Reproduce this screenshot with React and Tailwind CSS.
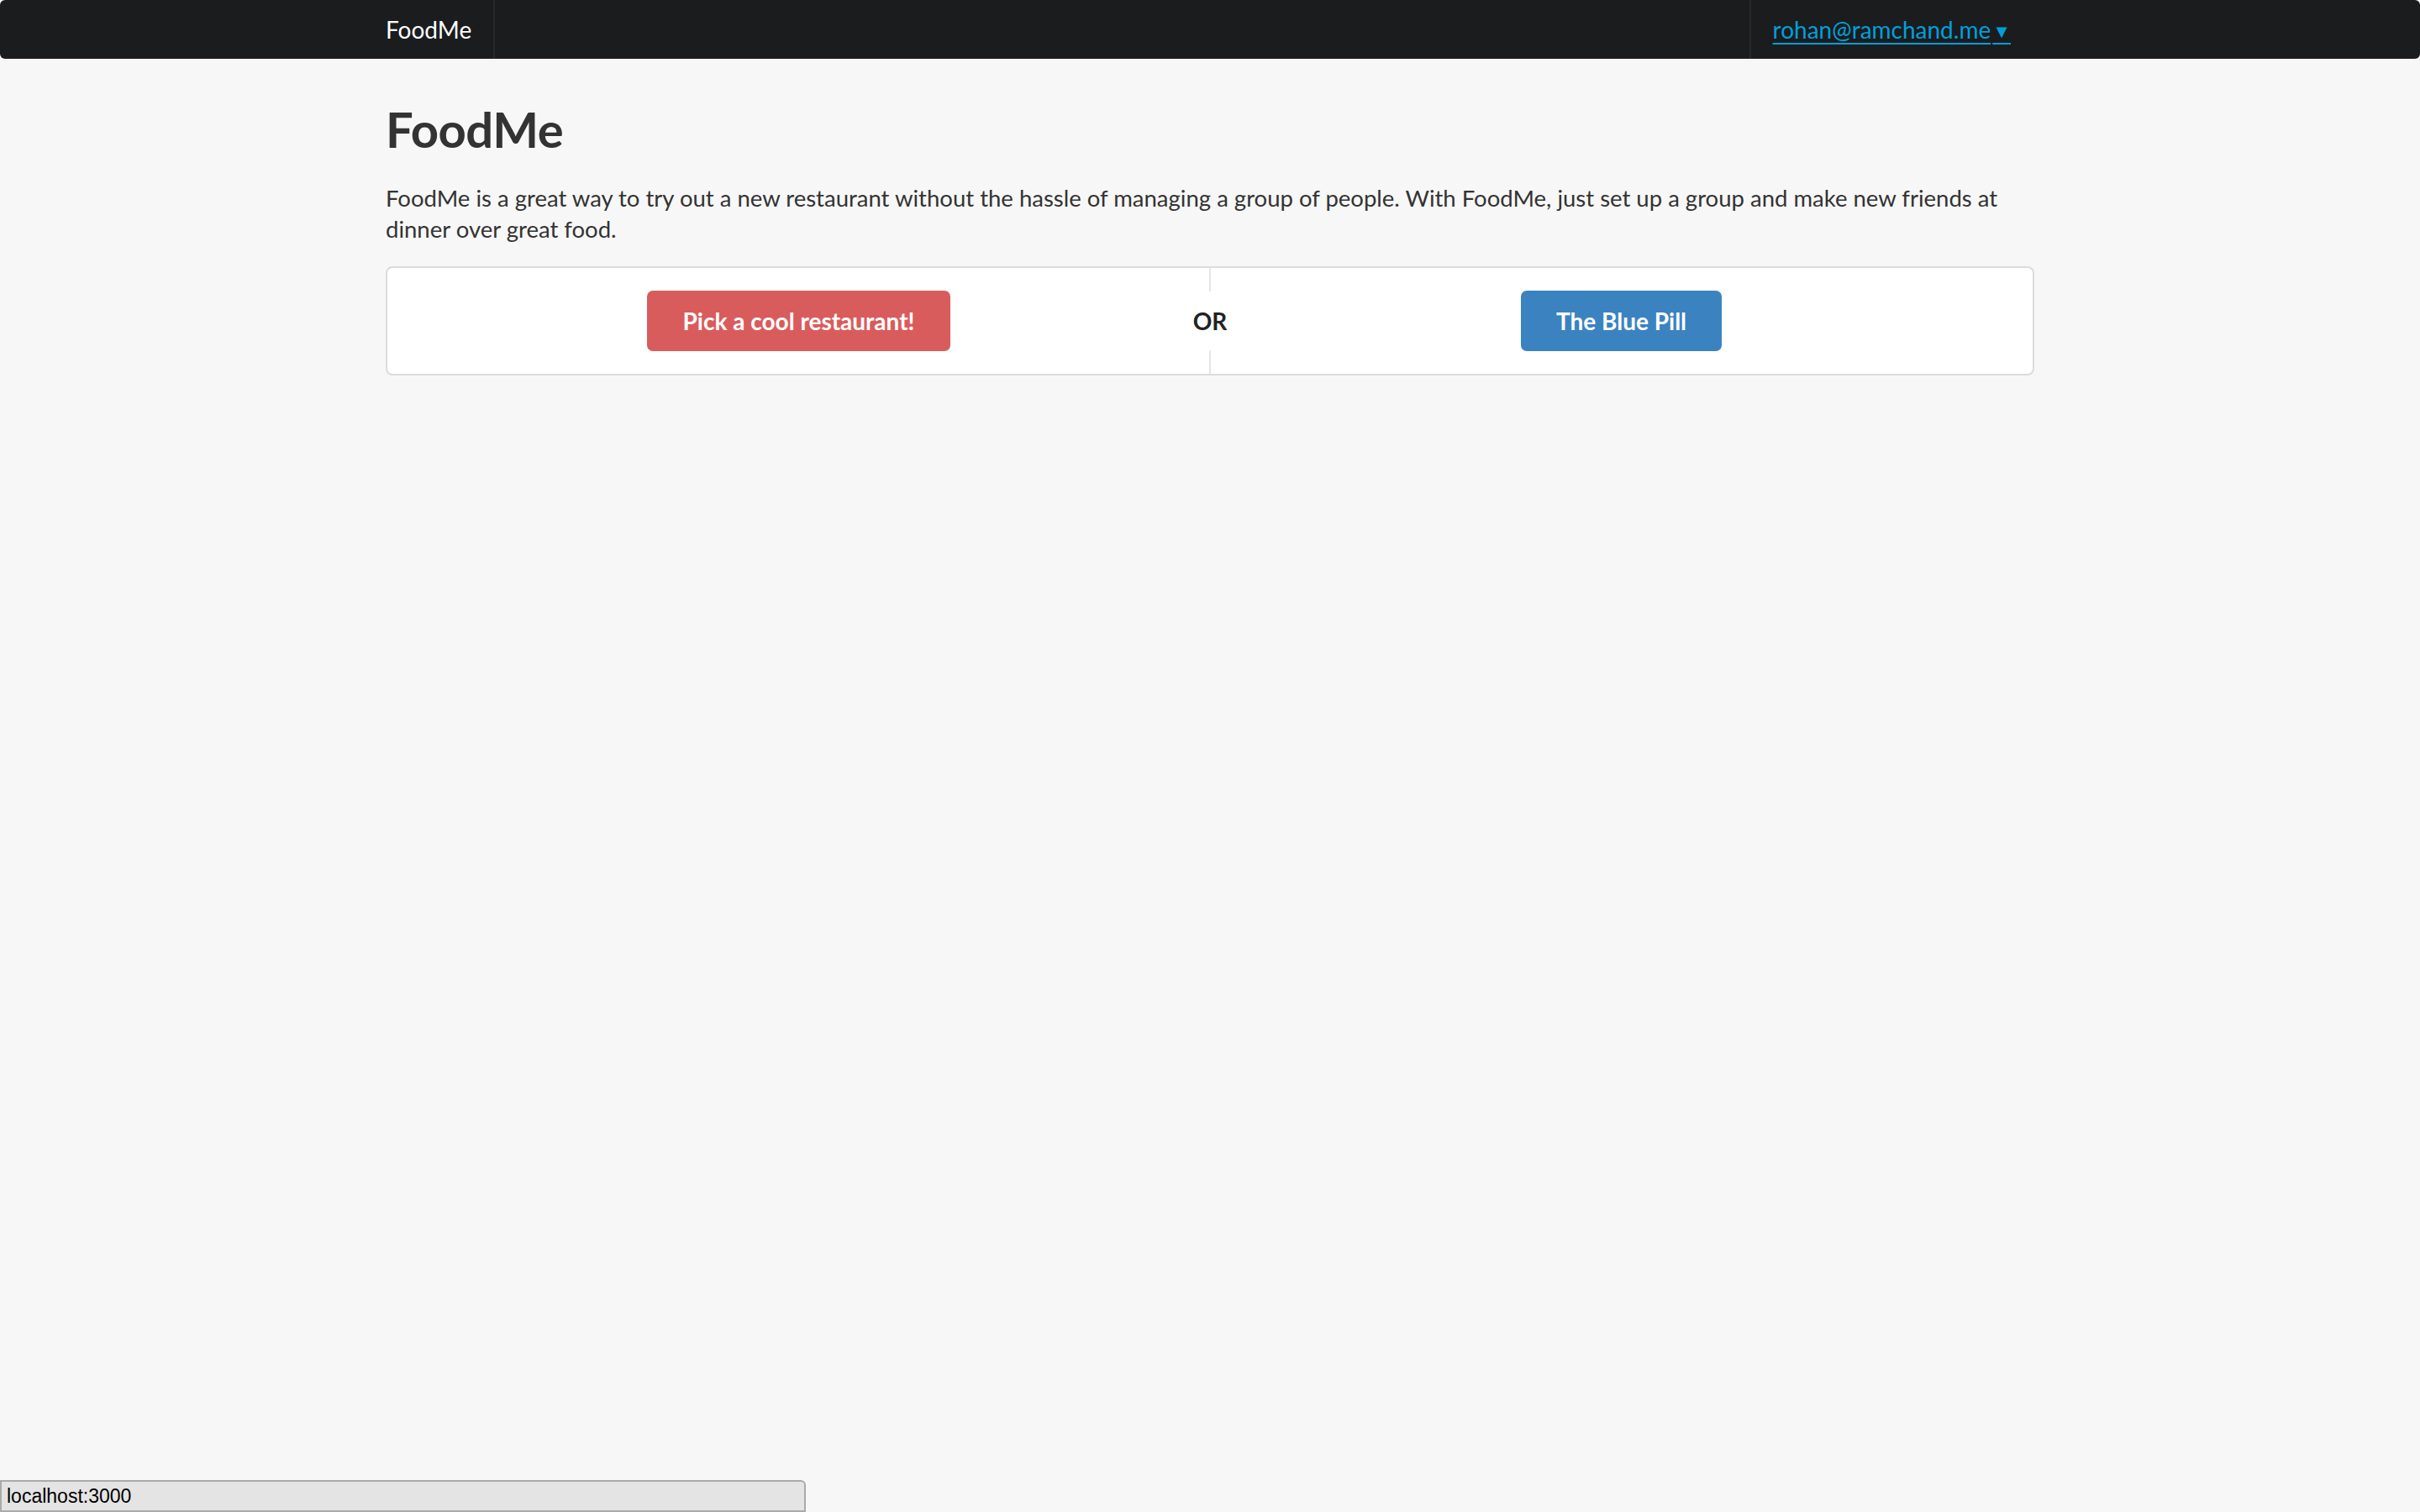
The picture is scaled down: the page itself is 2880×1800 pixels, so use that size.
import React from "react";

export default function App() {
  return (
    <div
      className="min-h-screen bg-[#f7f7f7] text-[#333]"
      style={{ fontFamily: "Lato, 'Open Sans', sans-serif" }}
    >
      {/* top menu */}
      <div className="h-[70px] bg-[#1b1c1e] rounded-[6px]">
        <div className="w-[1962px] mx-auto h-full flex items-stretch">
          <div className="flex items-center pr-[26px] border-r-2 border-white/[0.06] text-white text-[28px]">
            FoodMe
          </div>
          <div className="ml-auto flex items-center pl-[26px] pr-[28px] border-l-2 border-white/[0.06]">
            <a
              href="#"
              className="text-[#009fda] text-[28px] underline underline-offset-[5px] decoration-2"
            >
              rohan@ramchand.me<span className="text-[22px] align-[1px] ml-[2px]">▼</span>
            </a>
          </div>
        </div>
      </div>

      {/* content */}
      <div className="w-[1962px] mx-auto pt-[46px]">
        <h1 className="text-[58px] font-bold leading-[1.3] tracking-[-0.5px]">FoodMe</h1>
        <p className="mt-[26px] text-[27.5px] leading-[37px]">
          FoodMe is a great way to try out a new restaurant without the hassle of managing a group of
          people. With FoodMe, just set up a group and make new friends at dinner over great food.
        </p>

        <div className="mt-[26px] flex bg-white border-2 border-[#dcdcdc] rounded-[8px]">
          <div className="flex-1 flex justify-center items-center py-[27px]">
            <button className="h-[72px] px-[43px] bg-[#d95c5c] text-white text-[28px] font-bold rounded-[7px]">
              Pick a cool restaurant!
            </button>
          </div>
          <div className="w-0 self-stretch flex flex-col items-center">
            <div className="w-[2px] flex-1 bg-[#e6e6e6]" />
            <span className="py-[14px] text-[28px] font-bold text-[#222] whitespace-nowrap">OR</span>
            <div className="w-[2px] flex-1 bg-[#e6e6e6]" />
          </div>
          <div className="flex-1 flex justify-center items-center py-[27px]">
            <button className="h-[72px] px-[42px] bg-[#3b83c0] text-white text-[28px] font-bold rounded-[7px]">
              The Blue Pill
            </button>
          </div>
        </div>
      </div>

      {/* browser status bubble */}
      <div
        className="fixed left-0 bottom-0 w-[959px] h-[38px] bg-[#e4e4e4] border-2 border-[#aaa] rounded-tr-[6px] px-[6px] flex items-center text-[23px] text-black"
        style={{ fontFamily: "'Liberation Sans', Arial, sans-serif" }}
      >
        localhost:3000
      </div>
    </div>
  );
}
